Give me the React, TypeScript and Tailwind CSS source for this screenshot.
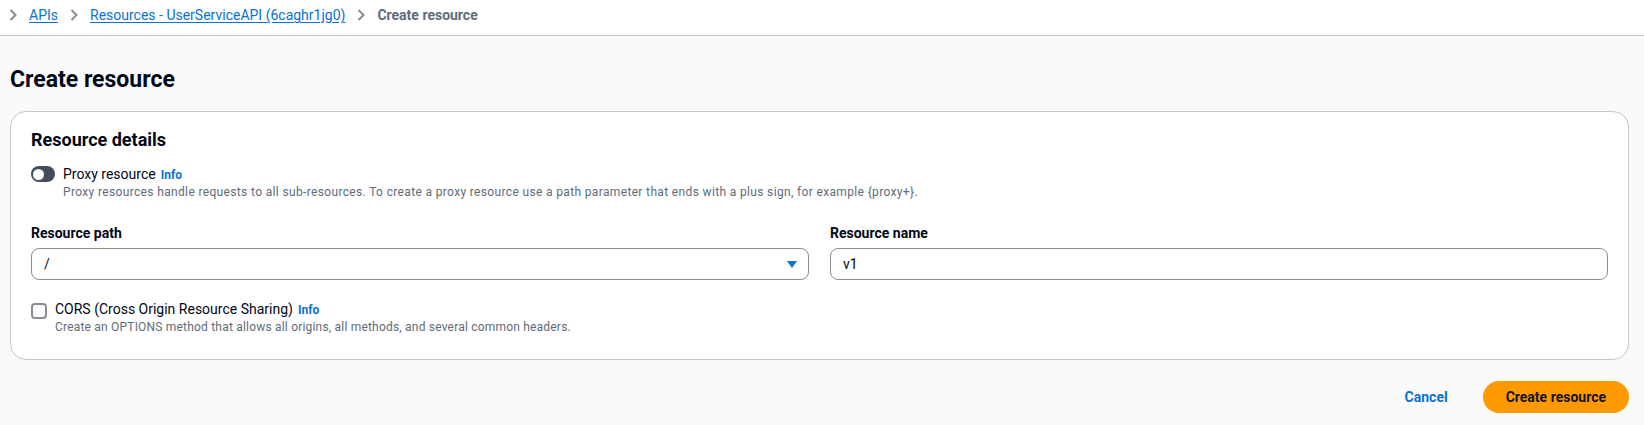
import React from 'react';

// Small chevron used between breadcrumb items
const Chevron: React.FC = () => (
  <svg width="8" height="12" viewBox="0 0 8 12" className="shrink-0">
    <path d="M1.5 1 L6.5 6 L1.5 11" fill="none" stroke="#8c8c94" strokeWidth="2" />
  </svg>
);

const InfoLink: React.FC = () => (
  <a className="text-xs font-bold text-[#0972d3] ml-[5px]">Info</a>
);

export default function App() {
  return (
    <div className="min-h-screen bg-[#fafafa] font-['Roboto',sans-serif] text-[#000716]">
      {/* Breadcrumbs */}
      <nav className="h-[36px] bg-white border-b border-[#c6c6cd]">
        <div className="h-[30px] flex items-center pl-[9px] gap-[12px] text-sm leading-5">
          <Chevron />
          <a className="text-[#0972d3] underline underline-offset-2">APIs</a>
          <Chevron />
          <a className="text-[#0972d3] underline underline-offset-2">Resources - UserServiceAPI (6caghr1jg0)</a>
          <Chevron />
          <span className="font-bold text-[#5f6b7a]">Create resource</span>
        </div>
      </nav>

      <main className="pl-[10px] pr-[15px]">
        <h1 className="pt-[29px] text-[23px] leading-[30px] font-bold">Create resource</h1>

        {/* Resource details card */}
        <section className="mt-[16px] bg-white border border-[#c6c6cd] rounded-2xl px-5 pt-[17px] pb-[24px]">
          <h2 className="text-lg leading-[22px] font-bold">Resource details</h2>

          <div className="mt-[13px] flex">
            <div className="mt-[2px] w-6 h-4 rounded-full bg-[#414d5c] flex items-center pl-[2px]">
              <div className="w-[11px] h-[11px] rounded-full bg-white" />
            </div>
            <div className="ml-2">
              <div className="text-sm leading-5 text-[#000716]">
                Proxy resource
                <InfoLink />
              </div>
              <div className="text-xs leading-4 tracking-[0.35px] text-[#5f6b7a]">
                Proxy resources handle requests to all sub-resources. To create a proxy resource use a path parameter that ends with a plus sign, for example {'{proxy+}'}.
              </div>
            </div>
          </div>

          <div className="mt-[23px] grid grid-cols-2 gap-[21px]">
            <div>
              <label className="block text-sm leading-5 font-bold">Resource path</label>
              <div className="mt-[5px] h-8 border border-[#8c8c94] rounded-lg flex items-center justify-between pl-3 pr-[11px] text-sm">
                <span>/</span>
                <svg width="10" height="7" viewBox="0 0 10 7">
                  <path d="M0 0 H10 L5 7 Z" fill="#0972d3" />
                </svg>
              </div>
            </div>
            <div>
              <label className="block text-sm leading-5 font-bold">Resource name</label>
              <div className="mt-[5px] h-8 border border-[#8c8c94] rounded-lg flex items-center px-3 text-sm">
                v1
              </div>
            </div>
          </div>

          <div className="mt-[19px] flex">
            <div className="mt-[4px] w-4 h-4 rounded-[4px] border-2 border-[#8c8c94] bg-white shrink-0" />
            <div className="ml-2">
              <div className="text-sm leading-5">
                CORS (Cross Origin Resource Sharing)
                <InfoLink />
              </div>
              <div className="text-xs leading-4 tracking-[0.2px] text-[#5f6b7a]">
                Create an OPTIONS method that allows all origins, all methods, and several common headers.
              </div>
            </div>
          </div>
        </section>

        {/* Actions */}
        <div className="mt-[21px] flex justify-end items-center">
          <button className="text-sm font-bold text-[#0972d3] px-2 mr-[27px]">Cancel</button>
          <button className="h-8 px-[23px] rounded-full bg-[#ff9900] text-sm font-bold text-[#0f141a]">
            Create resource
          </button>
        </div>
      </main>
    </div>
  );
}
